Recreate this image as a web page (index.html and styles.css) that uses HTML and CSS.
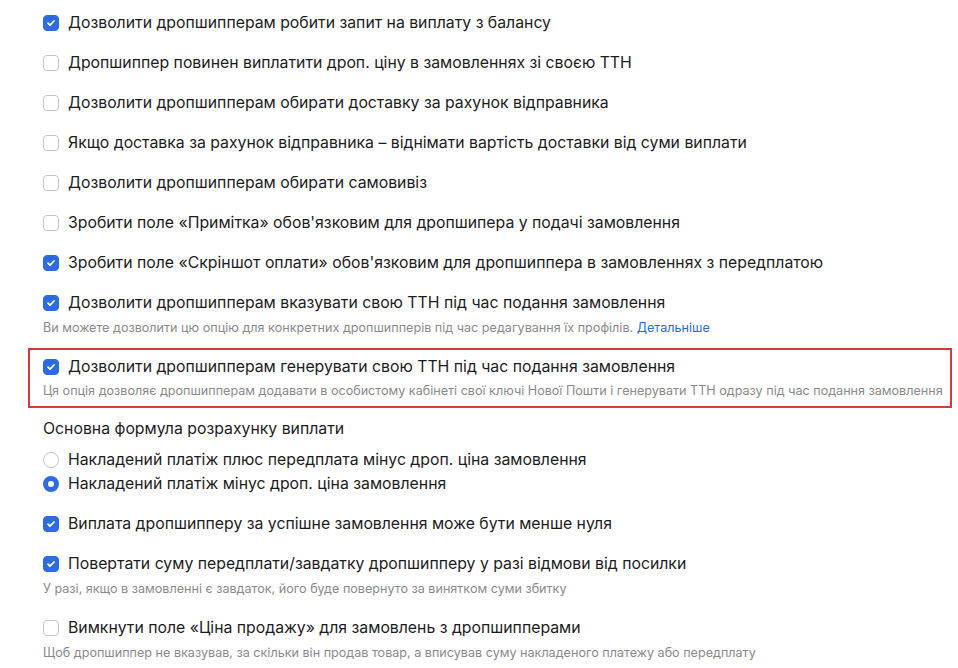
FILE: index.html
```html
<!DOCTYPE html>
<html lang="uk">
<head>
    <meta charset="UTF-8">
    <meta name="viewport" content="width=device-width, initial-scale=1.0">
    <title>Налаштування дропшипінгу</title>
    <link rel="stylesheet" href="styles.css">
</head>
<body>
    <div class="settings">
        <label class="option"><input type="checkbox" checked><span>Дозволити дропшипперам робити запит на виплату з балансу</span></label>
        <label class="option"><input type="checkbox"><span>Дропшиппер повинен виплатити дроп. ціну в замовленнях зі своєю ТТН</span></label>
        <label class="option"><input type="checkbox"><span>Дозволити дропшипперам обирати доставку за рахунок відправника</span></label>
        <label class="option"><input type="checkbox"><span>Якщо доставка за рахунок відправника – віднімати вартість доставки від суми виплати</span></label>
        <label class="option"><input type="checkbox"><span>Дозволити дропшипперам обирати самовивіз</span></label>
        <label class="option"><input type="checkbox"><span>Зробити поле «Примітка» обов'язковим для дропшипера у подачі замовлення</span></label>
        <label class="option"><input type="checkbox" checked><span>Зробити поле «Скріншот оплати» обов'язковим для дропшиппера в замовленнях з передплатою</span></label>

        <div class="option with-hint">
            <label class="row"><input type="checkbox" checked><span>Дозволити дропшипперам вказувати свою ТТН під час подання замовлення</span></label>
            <div class="hint">Ви можете дозволити цю опцію для конкретних дропшипперів під час редагування їх профілів. <a href="#">Детальніше</a></div>
        </div>

        <div class="option with-hint highlighted">
            <label class="row"><input type="checkbox" checked><span>Дозволити дропшипперам генерувати свою ТТН під час подання замовлення</span></label>
            <div class="hint">Ця опція дозволяє дропшипперам додавати в особистому кабінеті свої ключі Нової Пошти і генерувати ТТН одразу під час подання замовлення</div>
        </div>

        <div class="formula">
            <div class="formula-title">Основна формула розрахунку виплати</div>
            <label class="radio-row"><input type="radio" name="formula"><span>Накладений платіж плюс передплата мінус дроп. ціна замовлення</span></label>
            <label class="radio-row"><input type="radio" name="formula" checked><span>Накладений платіж мінус дроп. ціна замовлення</span></label>
        </div>

        <label class="option"><input type="checkbox" checked><span>Виплата дропшипперу за успішне замовлення може бути менше нуля</span></label>

        <div class="option with-hint">
            <label class="row"><input type="checkbox" checked><span>Повертати суму передплати/завдатку дропшипперу у разі відмови від посилки</span></label>
            <div class="hint">У разі, якщо в замовленні є завдаток, його буде повернуто за винятком суми збитку</div>
        </div>

        <div class="option with-hint">
            <label class="row"><input type="checkbox"><span>Вимкнути поле «Ціна продажу» для замовлень з дропшипперами</span></label>
            <div class="hint">Щоб дропшиппер не вказував, за скільки він продав товар, а вписував суму накладеного платежу або передплату</div>
        </div>
    </div>
</body>
</html>
```

FILE: styles.css
```css
body {
    margin: 0;
    font-family: Inter, "Noto Sans", sans-serif;
    color: #1c1c1c;
    background: #fff;
}
.settings {
    padding: 3px 6px 0 28px;
}
.option {
    display: block;
    padding: 8px 15px;
    font-size: 15.8px;
    line-height: 24px;
}
.option > span,
.row > span,
.radio-row > span {
    vertical-align: top;
}
.row {
    display: block;
}
.with-hint {
    padding-bottom: 10px;
}
.hint {
    margin-top: 4px;
    font-size: 12.6px;
    line-height: 18px;
    color: #8a8a8a;
    white-space: nowrap;
}
.hint a {
    color: #2a6bd6;
    text-decoration: none;
}
.highlighted {
    margin-top: 1px;
    padding: 5px 13px 6px;
    border: 2px solid #d63a3a;
}
.highlighted .hint {
    margin-top: 3px;
}
.formula {
    padding: 9px 15px 8px;
    font-size: 15.8px;
    line-height: 24px;
}
.formula-title {
    margin-bottom: 7px;
}
.radio-row {
    display: block;
}

input[type="checkbox"],
input[type="radio"] {
    appearance: none;
    width: 16px;
    height: 16px;
    margin: 4px 9px 0 0;
    vertical-align: top;
    border: 1px solid #c4c4c4;
    background: #fff;
    box-sizing: border-box;
}
input[type="checkbox"] {
    border-radius: 4px;
}
input[type="checkbox"]:checked {
    border-color: #2d6be0;
    background: #2d6be0 url("data:image/svg+xml,%3Csvg xmlns='http://www.w3.org/2000/svg' viewBox='0 0 16 16'%3E%3Cpath d='M5 8.2l2 2 4-4.2' fill='none' stroke='%23fff' stroke-width='1.8' stroke-linecap='round' stroke-linejoin='round'/%3E%3C/svg%3E") center / 16px 16px no-repeat;
}
input[type="radio"] {
    border-radius: 50%;
}
input[type="radio"]:checked {
    border: 5px solid #2d6be0;
}
```
